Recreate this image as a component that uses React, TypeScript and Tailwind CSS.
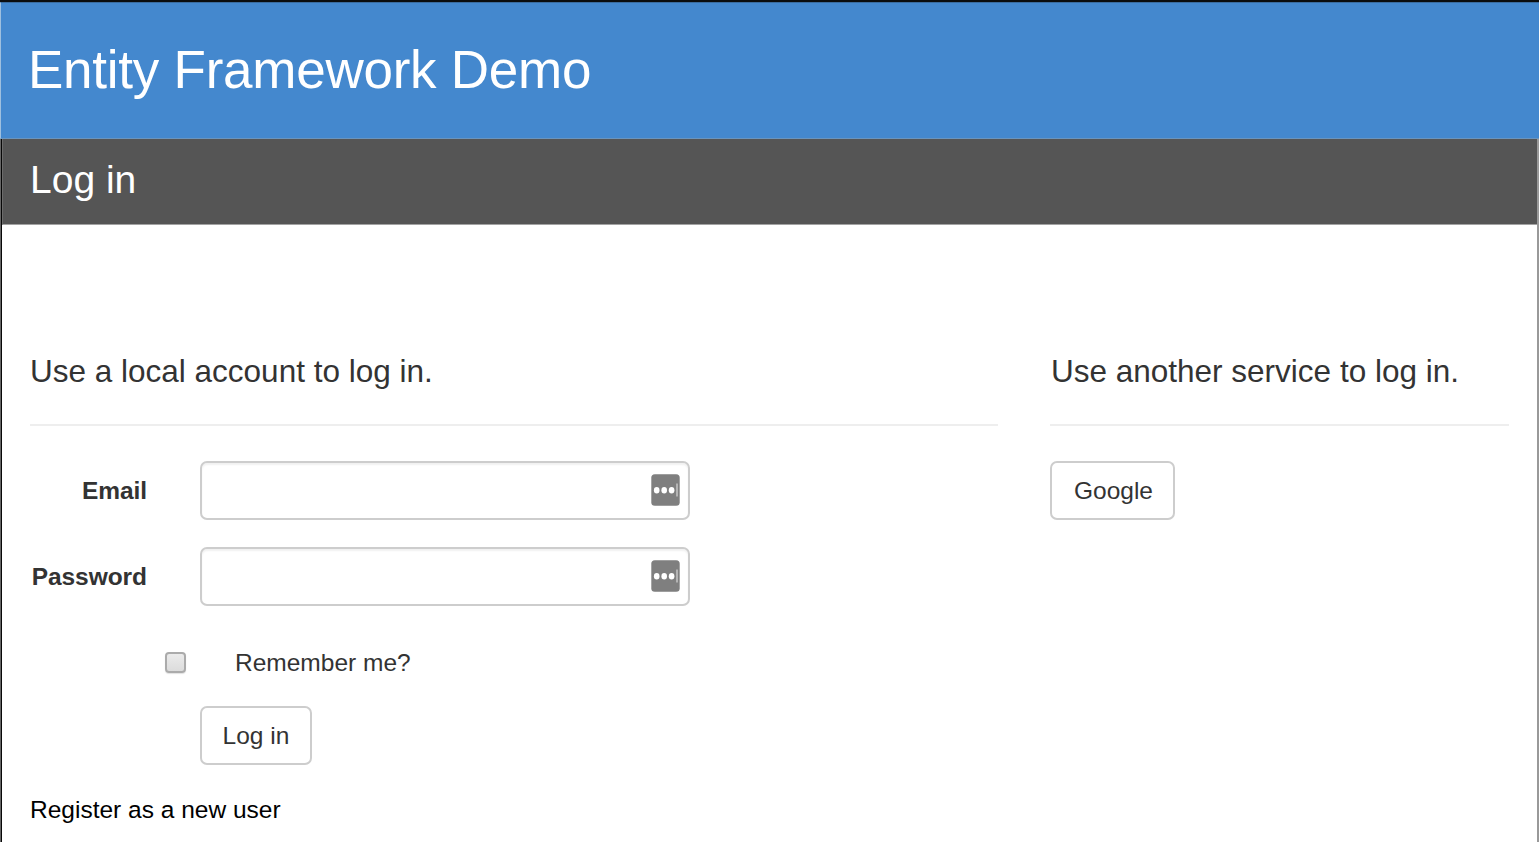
import React from "react";

function FillIcon() {
  return (
    <svg width="29" height="32" viewBox="0 0 29 32" className="mb-[2px] shrink-0" aria-hidden="true">
      <rect x="0.3" y="0.2" width="28.4" height="31.6" rx="3.5" fill="#7f7f7f" />
      <ellipse cx="5.7" cy="16.2" rx="2.8" ry="3.2" fill="#fff" />
      <ellipse cx="13.2" cy="16.2" rx="2.8" ry="3.2" fill="#fff" />
      <ellipse cx="20.6" cy="16.2" rx="2.8" ry="3.2" fill="#fff" />
      <rect x="25" y="9.5" width="2" height="13" fill="#b4b4b4" />
    </svg>
  );
}

function Field({ label, type }: { label: string; type: string }) {
  return (
    <div className="flex h-[59px] items-center">
      <label className="w-[117px] pt-[2px] text-right text-[24.5px] font-bold tracking-[-0.05px]">{label}</label>
      <div className="ml-[53px] flex h-[59px] w-[490px] items-center rounded-[7px] border-2 border-[#cdcdcd] pr-[8px] shadow-[inset_0_2px_2px_rgba(0,0,0,0.06)]">
        <input type={type} aria-label={label} className="min-w-0 flex-1 bg-transparent px-5 outline-none" />
        <FillIcon />
      </div>
    </div>
  );
}

export default function App() {
  return (
    <div className="h-[842px] overflow-hidden bg-white font-['Liberation_Sans',Arial,sans-serif] text-[24.5px] text-[#333]">
      <div className="h-[2px] bg-[#0b0d0e]" />
      <header className="h-[137px] border-b border-l border-t border-b-[#6a94bd] border-l-[#9fc0df] border-t-[#3a6c9f] bg-[#4488ce] pl-[27px] pt-[35px]">
        <h1 className="text-[53px] leading-[64px] tracking-[-0.25px] text-white">Entity Framework Demo</h1>
      </header>
      <div className="flex h-[703px]">
        <div className="w-[2px] border-l border-l-[#666] bg-[#080808]" />
        <div className="w-[1535px]">
          <div className="h-[86px] border-b border-l border-b-[#a3a3a3] border-l-[#6c6c6c] bg-[#555] pl-[27px] pt-[18px]">
            <h2 className="text-[39px] leading-[46px] text-white">Log in</h2>
          </div>
          <main className="flex pl-[28px] pt-[126px]">
            <section className="w-[968px]">
              <h3 className="h-[75px] border-b-2 border-[#eee] pt-[1px] text-[31.5px] leading-[38px]">Use a local account to log in.</h3>
              <form className="mt-[35px]">
                <Field label="Email" type="email" />
                <div className="h-[27px]" />
                <Field label="Password" type="password" />
                <label className="mt-[41px] flex h-[32px] items-center pl-[135px]">
                  <input type="checkbox" className="relative -top-px h-[21px] w-[21px] appearance-none rounded-[4px] border-2 border-[#ababab] bg-linear-to-b from-[#ebebeb] to-[#dcdcdc] shadow-[0_1px_1px_rgba(0,0,0,0.12)]" />
                  <span className="ml-[49px]">Remember me?</span>
                </label>
                <button type="button" className="ml-[170px] mt-[27px] block h-[59px] w-[112px] rounded-[7px] border-2 border-[#cdcdcd] pt-[2px]">Log in</button>
              </form>
              <a className="mt-[30px] block leading-[30px] text-black">Register as a new user</a>
            </section>
            <section className="ml-[52px] w-[459px]">
              <h3 className="h-[75px] border-b-2 border-[#eee] pl-[1px] pt-[1px] text-[31.5px] leading-[38px]">Use another service to log in.</h3>
              <button type="button" className="mt-[35px] block h-[59px] w-[125px] rounded-[7px] border-2 border-[#cdcdcd] pl-[2px] pt-[2px]">Google</button>
            </section>
          </main>
        </div>
        <div className="w-[2px] bg-[#999]" />
      </div>
    </div>
  );
}
